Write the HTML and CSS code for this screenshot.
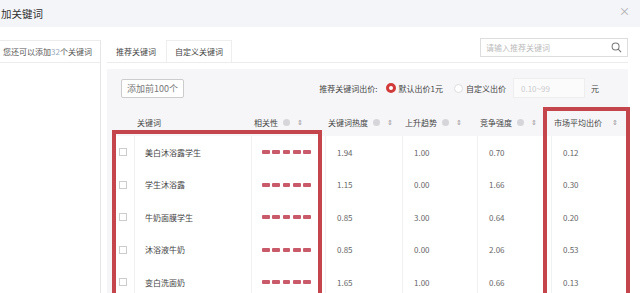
FILE: index.html
```html
<!DOCTYPE html>
<html lang="zh">
<head>
    <meta charset="UTF-8">
    <title>添加关键词</title>
    <link rel="stylesheet" href="styles.css">
</head>
<body>
    <div class="titlebar">
        <div class="title">加关键词</div>
        <div class="close">×</div>
    </div>

    <div class="main">
        <div class="side">
            <div class="side-head">您还可以添加<span class="num">32</span>个关键词</div>
        </div>

        <div class="content">
            <div class="tabbar">
                <div class="tab active">推荐关键词</div>
                <div class="tab">自定义关键词</div>
                <div class="search">
                    <span class="placeholder">请输入推荐关键词</span>
                    <svg class="search-icon" viewBox="0 0 12 12" width="11" height="11">
                        <circle cx="5" cy="5" r="3.8" fill="none" stroke="#777" stroke-width="1.1"/>
                        <line x1="7.8" y1="7.8" x2="11" y2="11" stroke="#777" stroke-width="1.2"/>
                    </svg>
                </div>
            </div>

            <div class="panel">
                <div class="toolbar">
                    <div class="btn">添加前100个</div>
                    <div class="bid">
                        <span class="bid-label">推荐关键词出价:</span>
                        <span class="radio checked"></span>
                        <span class="radio-text">默认出价1元</span>
                        <span class="radio"></span>
                        <span class="radio-text">自定义出价</span>
                        <div class="price-input">0.10~99</div>
                        <span class="unit">元</span>
                    </div>
                </div>

                <div class="table">
                    <div class="row head">
                        <div class="cell"></div>
                        <div class="cell">关键词</div>
                        <div class="cell">相关性<i class="help"></i><i class="sort">⇕</i></div>
                        <div class="cell">关键词热度<i class="help"></i><i class="sort">⇕</i></div>
                        <div class="cell">上升趋势<i class="help"></i><i class="sort">⇕</i></div>
                        <div class="cell">竞争强度<i class="help"></i><i class="sort">⇕</i></div>
                        <div class="cell">市场平均出价<i class="sort wide">⇕</i></div>
                    </div>

                    <div class="row">
                        <div class="cell"><span class="check"></span></div>
                        <div class="cell kw">美白沐浴露学生</div>
                        <div class="cell rel"><span class="bars"><b></b><b></b><b></b><b></b><b></b></span></div>
                        <div class="cell">1.94</div>
                        <div class="cell">1.00</div>
                        <div class="cell">0.70</div>
                        <div class="cell">0.12</div>
                    </div>
                    <div class="row">
                        <div class="cell"><span class="check"></span></div>
                        <div class="cell kw">学生沐浴露</div>
                        <div class="cell rel"><span class="bars"><b></b><b></b><b></b><b></b><b></b></span></div>
                        <div class="cell">1.15</div>
                        <div class="cell">0.00</div>
                        <div class="cell">1.66</div>
                        <div class="cell">0.30</div>
                    </div>
                    <div class="row">
                        <div class="cell"><span class="check"></span></div>
                        <div class="cell kw">牛奶面膜学生</div>
                        <div class="cell rel"><span class="bars"><b></b><b></b><b></b><b></b><b></b></span></div>
                        <div class="cell">0.85</div>
                        <div class="cell">3.00</div>
                        <div class="cell">0.64</div>
                        <div class="cell">0.20</div>
                    </div>
                    <div class="row">
                        <div class="cell"><span class="check"></span></div>
                        <div class="cell kw">沐浴液牛奶</div>
                        <div class="cell rel"><span class="bars"><b></b><b></b><b></b><b></b><b></b></span></div>
                        <div class="cell">0.85</div>
                        <div class="cell">0.00</div>
                        <div class="cell">2.06</div>
                        <div class="cell">0.53</div>
                    </div>
                    <div class="row">
                        <div class="cell"><span class="check"></span></div>
                        <div class="cell kw">变白洗面奶</div>
                        <div class="cell rel"><span class="bars"><b></b><b></b><b></b><b></b><b></b></span></div>
                        <div class="cell">1.65</div>
                        <div class="cell">1.00</div>
                        <div class="cell">0.66</div>
                        <div class="cell">0.13</div>
                    </div>

                    <!-- 红框标注 -->
                    <div class="mark mark-left"></div>
                    <div class="mark mark-right"></div>
                </div>
            </div>
        </div>
    </div>
</body>
</html>
```

FILE: styles.css
```css
* {
    margin: 0;
    padding: 0;
    box-sizing: border-box;
    font-family: 'Noto Sans CJK SC', 'Noto Sans', sans-serif;
}

body {
    width: 640px;
    height: 293px;
    overflow: hidden;
    background: #fff;
    color: #555;
    font-size: 8px;
}

.titlebar {
    height: 27px;
    background: #f4f5f9;
    display: flex;
    align-items: center;
    justify-content: space-between;
    padding-right: 10px;
}

.title {
    font-size: 10.5px;
    color: #333;
    margin-left: 1px;
}

.close {
    font-size: 11px;
    color: #aaa;
    margin-top: -6px;
}

.main {
    display: flex;
    height: 266px;
    padding-top: 13px;
    overflow: hidden;
}

.side {
    width: 101px;
    border-top: 1px solid #ececec;
    border-right: 1px solid #e6e6e6;
}

.side-head {
    height: 22px;
    line-height: 21px;
    padding-left: 3px;
    border-bottom: 1px solid #ececec;
    white-space: nowrap;
    color: #555;
}

.side-head .num {
    color: #9ab;
}

.content {
    flex: 1;
    padding: 0 10px 0 6px;
}

.tabbar {
    display: flex;
    height: 23px;
    border-bottom: 1px solid #ececec;
    margin-right: 2px;
}

.tab {
    padding: 0 8px;
    line-height: 22px;
    border: 1px solid #eee;
    border-bottom: none;
    color: #444;
}

.tab.active {
    background: #fff;
    border-color: transparent;
    margin-right: 1px;
}

.search {
    margin-left: auto;
    margin-top: -2px;
    width: 148px;
    height: 19px;
    border: 1px solid #ddd;
    display: flex;
    align-items: center;
    justify-content: space-between;
    padding: 0 5px;
}

.placeholder {
    color: #bbb;
}

.panel {
    margin-top: 6px;
    padding-left: 5px;
    height: 224px;
    overflow: hidden;
    background: linear-gradient(#f6f6f8, #f6f6f8) 0 0 / calc(100% - 2px) 100% no-repeat;
}

.toolbar {
    display: flex;
    align-items: center;
    padding: 9px 31px 0 9px;
}

.btn {
    height: 19px;
    line-height: 17px;
    padding: 0 5px;
    border: 1px solid #ccc;
    border-radius: 2px;
    background: #fff;
    font-size: 9px;
    color: #777;
}

.bid {
    margin-left: auto;
    display: flex;
    align-items: center;
    color: #444;
}

.bid-label {
    margin-right: 8px;
}

.radio {
    width: 9px;
    height: 9px;
    border-radius: 50%;
    border: 1px solid #ddd;
    background: #fff;
    margin-right: 3px;
}

.radio.checked {
    border: 3.5px solid #d23a3a;
    background: #fff;
    width: 10px;
    height: 10px;
}

.radio-text {
    margin-right: 11px;
}

.price-input {
    width: 72px;
    height: 20px;
    line-height: 20px;
    padding-left: 7px;
    margin-left: -4px;
    background: #fbfbfc;
    border: 1px solid #eee;
    color: #ccc;
}

.unit {
    margin-left: 6px;
}

.table {
    position: relative;
    margin-top: 10px;
}

.row {
    display: grid;
    grid-template-columns: 22px 117px 74px 77px 75px 74px 77px;
    height: 32.5px;
    background: #fff;
}

.row .cell {
    display: flex;
    align-items: center;
    padding-left: 11px;
    border-left: 1px solid #f1f1f3;
    color: #666;
}

.row .cell:first-child {
    border-left: none;
    padding-left: 7px;
}

.row .cell.kw {
    padding-left: 10px;
    color: #444;
}

.row .cell.rel {
    padding-left: 10px;
}

.row.head {
    height: 28px;
    background: #f6f6f8;
}

.row.head .cell {
    padding-left: 3px;
    border-left: none;
    color: #444;
}

.help {
    width: 7px;
    height: 7px;
    border-radius: 50%;
    background: #d6d6da;
    margin-left: 5px;
}

.sort {
    font-style: normal;
    color: #999;
    font-size: 7px;
    margin-left: 7px;
}

.sort.wide {
    margin-left: 10px;
}

.check {
    width: 8px;
    height: 8px;
    border: 1px solid #ccc;
    background: #fff;
}

.bars {
    display: flex;
    gap: 2.5px;
}

.bars b {
    width: 7.8px;
    height: 4px;
    background: #c95a6a;
    border-radius: 1px;
}

.mark {
    position: absolute;
    border: 4px solid #c4454b;
    height: 200px;
}

.mark-left {
    left: 0;
    top: 22px;
    width: 210px;
}

.mark-right {
    left: 431px;
    top: -1px;
    width: 87px;
}
```
